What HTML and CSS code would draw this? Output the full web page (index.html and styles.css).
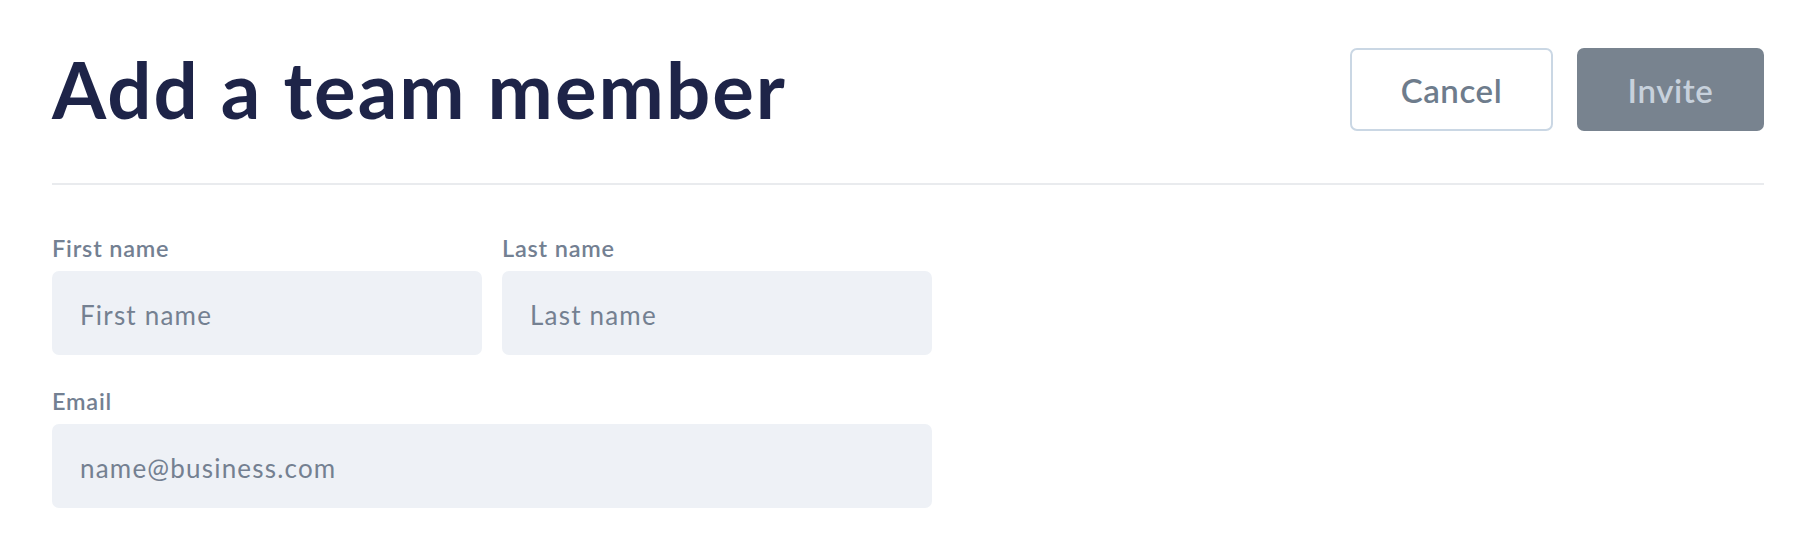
FILE: index.html
```html
<!DOCTYPE html>
<html lang="en">
<head>
<meta charset="utf-8">
<title>Add a team member</title>
<link rel="stylesheet" href="styles.css">
</head>
<body>
<div class="page">
  <header class="header">
    <h1 class="title">Add a team member</h1>
    <div class="actions">
      <button class="btn btn-cancel" type="button">Cancel</button>
      <button class="btn btn-invite" type="button" disabled>Invite</button>
    </div>
  </header>
  <hr class="divider">
  <form class="form">
    <div class="row">
      <label class="field">
        <span class="label">First name</span>
        <input class="input" type="text" placeholder="First name">
      </label>
      <label class="field">
        <span class="label">Last name</span>
        <input class="input" type="text" placeholder="Last name">
      </label>
    </div>
    <label class="field">
      <span class="label">Email</span>
      <input class="input" type="email" placeholder="name@business.com">
    </label>
  </form>
</div>
</body>
</html>
```
FILE: styles.css
```css
html, body {
  margin: 0;
  padding: 0;
  background: #ffffff;
}
body {
  font-family: "Lato", "Liberation Sans", sans-serif;
}
.page {
  padding: 48px 44px 0 52px;
}
.header {
  display: flex;
  justify-content: space-between;
  align-items: center;
}
.title {
  margin: 0;
  font-size: 78px;
  font-weight: 700;
  line-height: 83px;
  color: #1e2448;
  letter-spacing: 2px;
}
.actions {
  display: flex;
  gap: 24px;
}
.btn {
  height: 83px;
  border-radius: 7px;
  font-family: "Lato", "Liberation Sans", sans-serif;
  font-size: 33px;
  font-weight: 600;
  letter-spacing: 0.6px;
  padding: 0;
}
.btn-cancel {
  width: 203px;
  background: #ffffff;
  border: 2px solid #cad7e4;
  color: #6e7c8c;
}
.btn-invite {
  width: 187px;
  background: #78838f;
  border: none;
  color: #c7d1dc;
}
.divider {
  margin: 52px 0 0 0;
  border: none;
  height: 2px;
  background: #e9ebee;
}
.form {
  width: 880px;
  padding-top: 50px;
  display: flex;
  flex-direction: column;
  gap: 33px;
}
.row {
  display: grid;
  grid-template-columns: 1fr 1fr;
  gap: 20px;
}
.field {
  display: flex;
  flex-direction: column;
  gap: 10px;
}
.label {
  font-size: 23.5px;
  line-height: 26px;
  font-weight: 600;
  letter-spacing: 0.8px;
  color: #738092;
}
.input {
  box-sizing: border-box;
  width: 100%;
  height: 84px;
  border: none;
  border-radius: 7px;
  background: #eef1f6;
  padding: 4px 28px 0 28px;
  font-family: "Lato", "Liberation Sans", sans-serif;
  font-size: 26px;
  letter-spacing: 1.2px;
  color: #1e2448;
  outline: none;
}
.input::placeholder {
  color: #748091;
  opacity: 1;
}
```
